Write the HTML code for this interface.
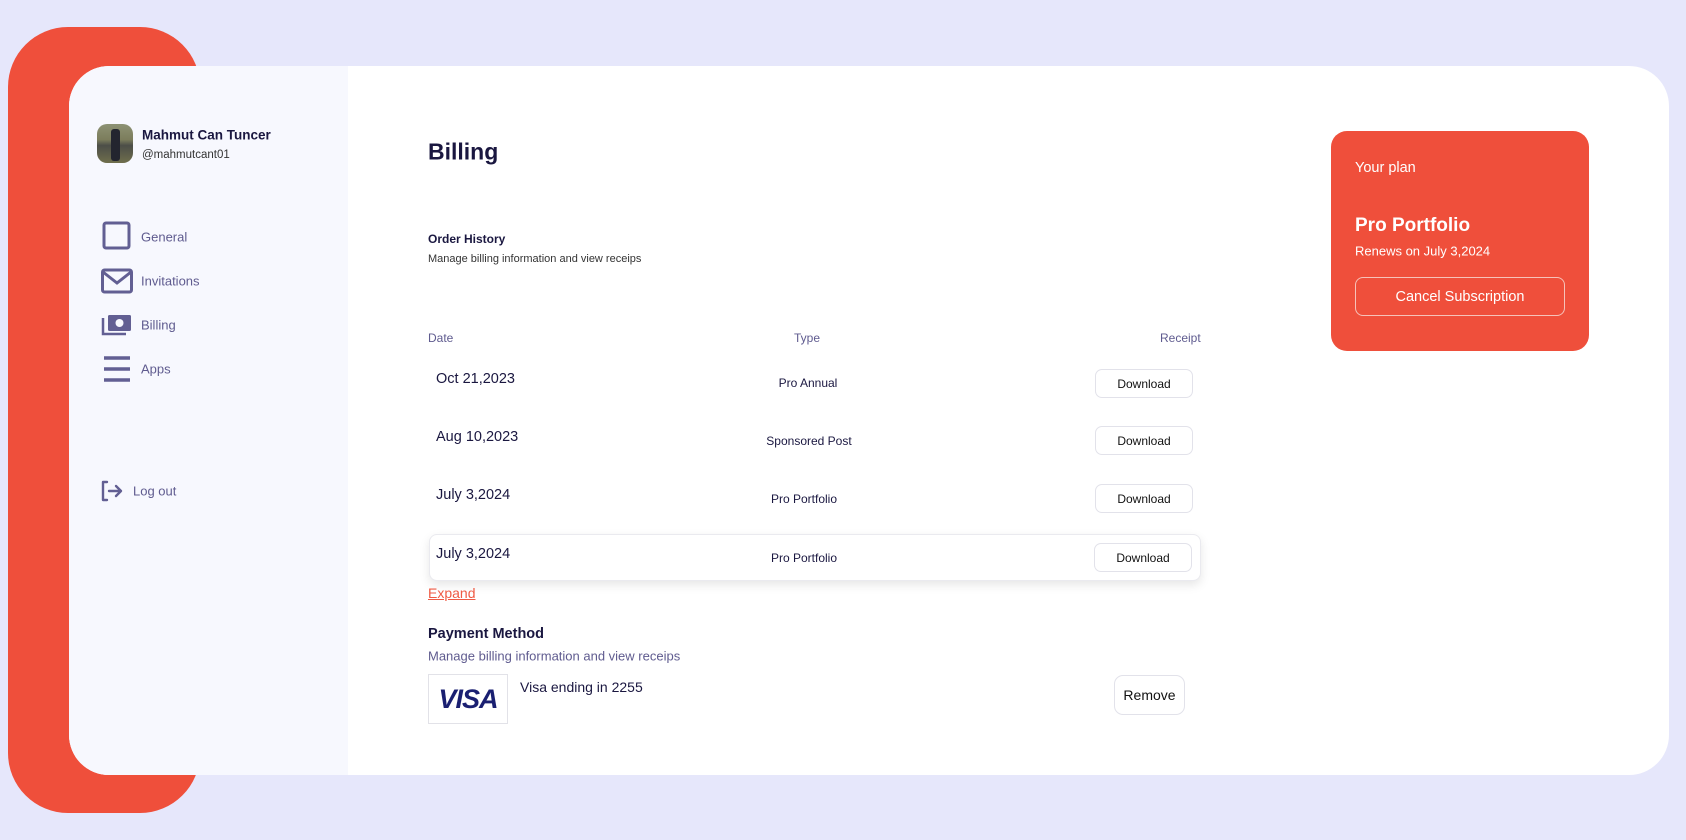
<!DOCTYPE html>
<html><head><style>
*{margin:0;padding:0;box-sizing:border-box}
body{width:1686px;height:840px;background:#e6e7fb;font-family:"Liberation Sans",sans-serif;position:relative;overflow:hidden;color:#1a1740}
.a{position:absolute;white-space:nowrap}
.red{left:8px;top:27px;width:192px;height:786px;background:#ef4f3b;border-radius:60px}
.card{left:69px;top:66px;width:1600px;height:709px;background:#fff;border-radius:40px;overflow:hidden}
.side{left:0;top:0;width:279px;height:709px;background:#f7f8fe}
.nav{font-size:13px;color:#5f5b8f;transform:translateY(-50%)}
.c{transform:translateY(-50%)}
.btn{border:1px solid #e2e2ea;border-radius:7px;background:#fff;font-size:12px;color:#111;display:flex;align-items:center;justify-content:center}
</style></head><body>
<div class="a red"></div>
<div class="a card">
 <div class="a side"></div>
</div>
<div class="a" style="left:97px;top:124px;width:36px;height:39px;border-radius:10px;background:linear-gradient(180deg,#8d9274 0%,#7c7d5c 40%,#4c4e48 55%,#6f6e4c 100%)"></div>
<div class="a" style="left:111px;top:129px;width:9px;height:32px;background:#23252f;border-radius:3px"></div>
<div class="a c" style="left:142px;top:135px;font-size:13.5px;font-weight:bold">Mahmut Can Tuncer</div>
<div class="a c" style="left:142px;top:155px;font-size:11.5px;color:#333">@mahmutcant01</div>
<svg class="a" style="left:100px;top:220px" width="34" height="170" viewBox="0 0 34 170" fill="none" stroke="#625f93" stroke-width="3">
 <rect x="4" y="3" width="25" height="25" rx="2"/>
 <rect x="2.5" y="50" width="29" height="22" rx="2"/>
 <path d="M3 52 L17 63 L31 52"/>
 <rect x="8" y="95" width="23" height="16" rx="1.5" fill="#625f93" stroke="none"/>
 <circle cx="19.5" cy="103" r="4" fill="#f7f8fe" stroke="none"/>
 <path d="M3 98 V114 H26" stroke-width="2.5"/>
 <path d="M4 138 H30 M4 149 H30 M4 160 H30" stroke-width="3.5"/>
</svg>
<div class="a nav" style="left:141px;top:237px">General</div>
<div class="a nav" style="left:141px;top:281px">Invitations</div>
<div class="a nav" style="left:141px;top:325px">Billing</div>
<div class="a nav" style="left:141px;top:369px">Apps</div>
<svg class="a" style="left:100px;top:480px" width="24" height="22" viewBox="0 0 24 22" fill="none" stroke="#625f93" stroke-width="2.4" stroke-linecap="round" stroke-linejoin="round">
 <path d="M7 2 H3 V20 H7"/><path d="M9 11 H21 M16 6 L21 11 L16 16"/>
</svg>
<div class="a nav" style="left:133px;top:491px">Log out</div>
<div class="a c" style="left:428px;top:152px;font-size:23px;font-weight:bold">Billing</div>
<div class="a c" style="left:428px;top:239px;font-size:12px;font-weight:bold">Order History</div>
<div class="a c" style="left:428px;top:259px;font-size:11px;color:#333">Manage billing information and view receips</div>
<div class="a nav" style="left:428px;top:338px;font-size:12px">Date</div>
<div class="a nav" style="left:794px;top:338px;font-size:12px">Type</div>
<div class="a nav" style="left:1160px;top:338px;font-size:12px">Receipt</div>
<div class="a" style="left:429px;top:534px;width:772px;height:47px;border:1px solid #eaeaef;border-radius:8px;box-shadow:0 4px 10px rgba(0,0,0,.1);background:#fff"></div>
<div class="a c" style="left:436px;top:379px;font-size:14.5px">Oct 21,2023</div>
<div class="a c" style="left:436px;top:437px;font-size:14.5px">Aug 10,2023</div>
<div class="a c" style="left:436px;top:495px;font-size:14.5px">July 3,2024</div>
<div class="a c" style="left:436px;top:554px;font-size:14.5px">July 3,2024</div>
<div class="a c" style="left:808px;top:383px;font-size:12px;transform:translate(-50%,-50%)">Pro Annual</div>
<div class="a c" style="left:809px;top:441px;font-size:12px;transform:translate(-50%,-50%)">Sponsored Post</div>
<div class="a c" style="left:804px;top:499px;font-size:12px;transform:translate(-50%,-50%)">Pro Portfolio</div>
<div class="a c" style="left:804px;top:558px;font-size:12px;transform:translate(-50%,-50%)">Pro Portfolio</div>
<div class="a btn" style="left:1095px;top:369px;width:98px;height:29px">Download</div>
<div class="a btn" style="left:1095px;top:426px;width:98px;height:29px">Download</div>
<div class="a btn" style="left:1095px;top:484px;width:98px;height:29px">Download</div>
<div class="a btn" style="left:1094px;top:543px;width:98px;height:29px">Download</div>
<div class="a c" style="left:428px;top:593px;font-size:14px;color:#ef5a44;text-decoration:underline">Expand</div>
<div class="a c" style="left:428px;top:634px;font-size:14.5px;font-weight:bold">Payment Method</div>
<div class="a c" style="left:428px;top:656px;font-size:13px;color:#5f5b8f">Manage billing information and view receips</div>
<div class="a" style="left:428px;top:674px;width:80px;height:50px;border:1px solid #e2e2e8;display:flex;align-items:center;justify-content:center;font-size:27px;font-weight:bold;font-style:italic;color:#1a1f71;letter-spacing:-1px">VISA</div>
<div class="a c" style="left:520px;top:687px;font-size:14px">Visa ending in 2255</div>
<div class="a btn" style="left:1114px;top:675px;width:71px;height:40px;font-size:14px;border-radius:9px">Remove</div>
<div class="a" style="left:1331px;top:131px;width:258px;height:220px;background:#ef4f3b;border-radius:16px"></div>
<div class="a c" style="left:1355px;top:168px;font-size:14.5px;color:#fff">Your plan</div>
<div class="a c" style="left:1355px;top:226px;font-size:19px;font-weight:bold;color:#fff">Pro Portfolio</div>
<div class="a c" style="left:1355px;top:251px;font-size:13px;color:#fff">Renews on July 3,2024</div>
<div class="a" style="left:1355px;top:277px;width:210px;height:39px;border:1px solid #f6c2b9;border-radius:8px;color:#fff;font-size:14.5px;display:flex;align-items:center;justify-content:center">Cancel Subscription</div>
</body></html>
